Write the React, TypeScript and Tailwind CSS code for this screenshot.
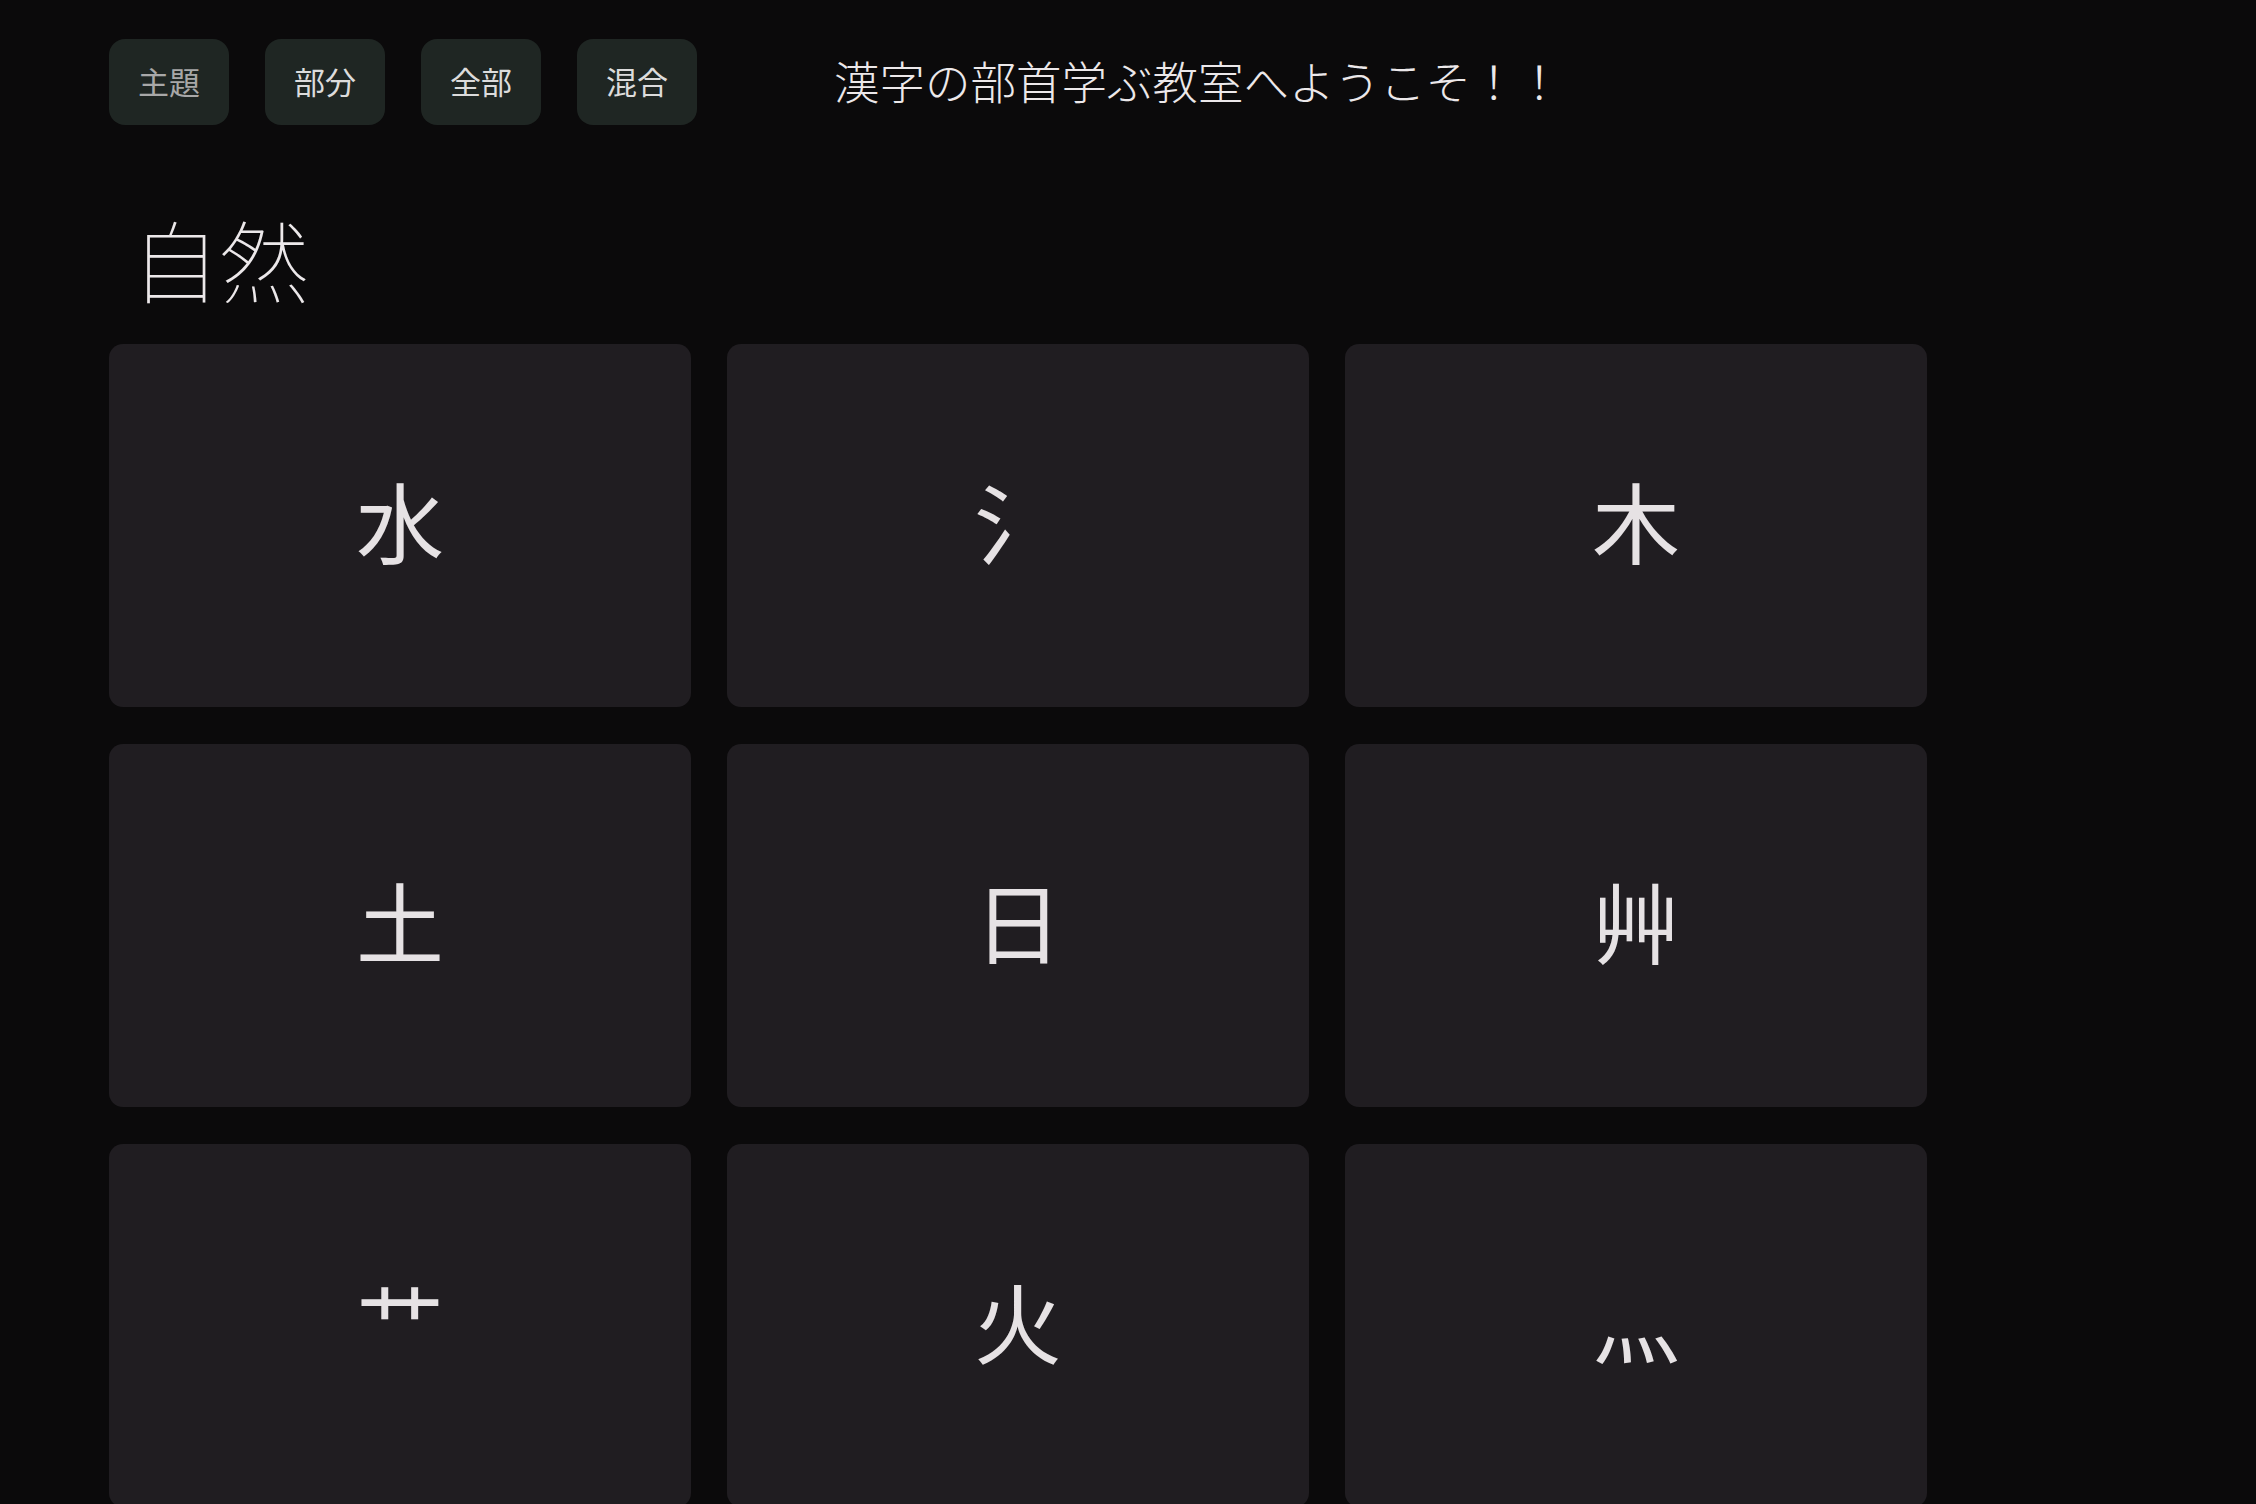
import React from "react";

const buttons = ["主題", "部分", "全部", "混合"];
const chars = ["水", "氵", "木", "土", "日", "艸", "艹", "火", "灬"];

export default function App() {
  return (
    <div
      className="min-h-screen bg-[#0b0a0b] pl-[109px] pt-[39px] pb-[40px]"
      style={{ fontFamily: '"Noto Sans CJK JP", "Noto Sans", sans-serif' }}
    >
      <div className="flex items-center">
        <div className="flex gap-[36px]">
          {buttons.map((b, i) => (
            <button
              key={b}
              className={`h-[86px] w-[120px] rounded-2xl bg-[#1f2623] pb-[2px] text-[31px] font-normal ${
                i === 0 ? "text-[#a8a8a8]" : "text-[#dcdcdc]"
              }`}
            >
              {b}
            </button>
          ))}
        </div>
        <div className="ml-[137px] pb-[3px] text-[45.5px] font-light text-[#ece8ea]">
          漢字の部首学ぶ教室へようこそ！！
        </div>
      </div>
      <h1 className="ml-[22px] mt-[88px] mb-[42px] text-[89px] leading-none font-thin text-[#ece8ea]">
        自然
      </h1>
      <div className="grid w-[1818px] grid-cols-3 gap-x-[36px] gap-y-[37px]">
        {chars.map((c) => (
          <div
            key={c}
            className="flex h-[363px] items-center justify-center rounded-[14px] bg-[#201d21] pb-[14px] text-[88px] font-normal leading-none text-[#e6e2e4]"
          >
            {c}
          </div>
        ))}
      </div>
    </div>
  );
}
